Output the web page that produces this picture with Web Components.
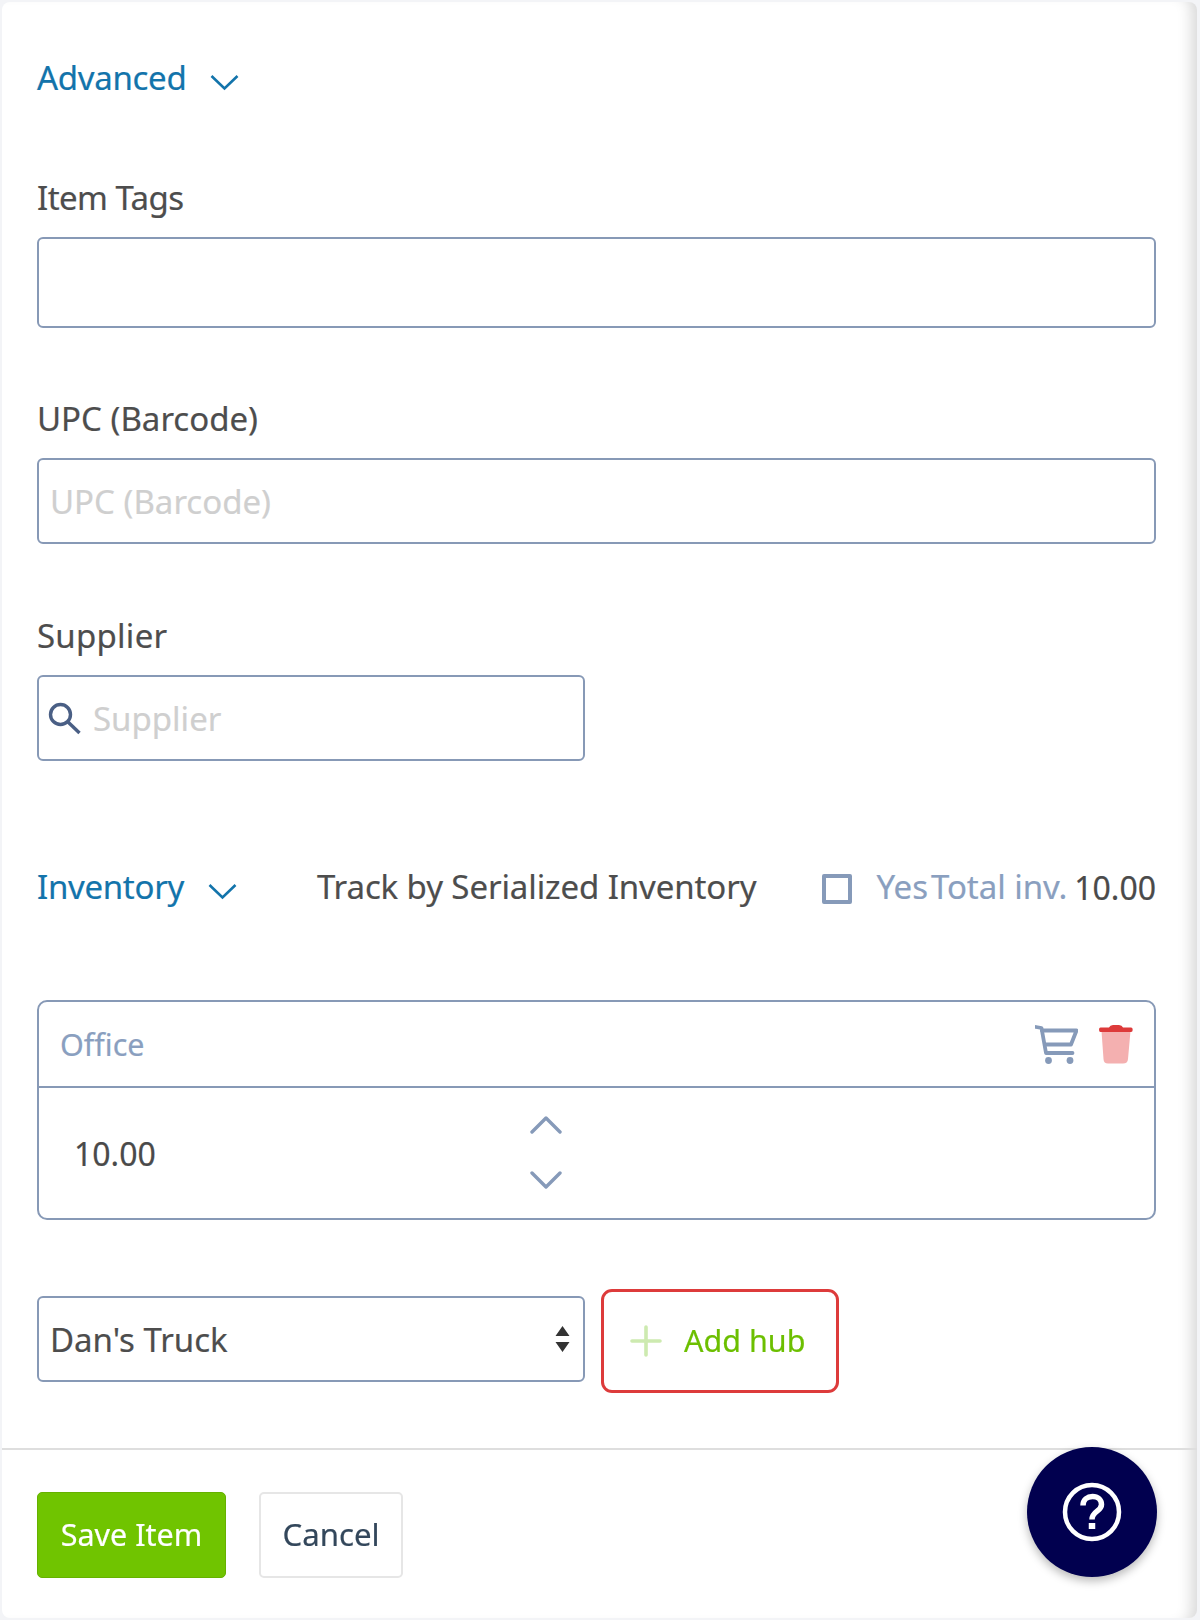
<!DOCTYPE html>
<html lang="en"><head><meta charset="utf-8"><title>Item form</title>
<style>
html,body{margin:0;padding:0;background:#f3f4f7;height:1620px;overflow:hidden}
body{font-family:"Noto Sans","Open Sans",sans-serif;font-size:33px;color:#4a4a4a;-webkit-text-stroke:.2px}
item-form{filter:blur(.3px)}
</style></head><body>
<item-form>
  <section-toggle style="margin-top:54px">Advanced</section-toggle>
  <form-field label="Item Tags" spacing="-.55" style="margin-top:76px" height="91"></form-field>
  <form-field label="UPC (Barcode)" placeholder="UPC (Barcode)" style="margin-top:69px"></form-field>
  <form-field label="Supplier" spacing=".25" placeholder="Supplier" narrow search style="margin-top:70px"></form-field>
  <inventory-bar style="margin-top:104px"></inventory-bar>
  <hub-card name="Office" qty="10.00" style="margin-top:91px"></hub-card>
  <hub-adder style="margin-top:69px"></hub-adder>
  <form-actions slot="footer"></form-actions>
  <help-fab slot="fab"></help-fab>
</item-form>
<script>
const define=(name,html,init)=>customElements.define(name,class extends HTMLElement{
  constructor(){super();this.attachShadow({mode:'open'}).innerHTML=html;}
  connectedCallback(){init&&init(this,this.shadowRoot);}
});
const chev='<svg width="29" height="17" viewBox="0 0 29 17" fill="none" stroke="currentColor" stroke-width="2.6"><path d="M1.5 2 14.5 14.5 27.5 2"/></svg>';

define('item-form',`<style>
:host{display:flex;flex-direction:column;position:relative;box-sizing:border-box;width:1195px;height:1616px;margin:2px 0 0 2px;background:#fff;border-radius:8px;box-shadow:inset -16px 0 14px -10px rgba(0,0,0,.15)}
.body{flex:1;display:flex;flex-direction:column;padding:0 41px 0 35px}
.foot{border-top:2px solid #dedede}
.fab{position:absolute;left:1025px;top:1445px}
::slotted(*){flex:none}
</style><div class="body"><slot></slot></div><div class="foot"><slot name="footer"></slot></div><div class="fab"><slot name="fab"></slot></div>`);

define('section-toggle',`<style>
:host{display:flex;align-items:center;gap:24px;color:#1374ab;height:44px;line-height:44px;letter-spacing:-.3px}
svg{margin-top:8px}
</style><span><slot></slot></span>${chev}`);

define('form-field',`<style>
:host{display:block}
label{display:block;height:44px;line-height:44px;margin-bottom:17px;color:#4d4d4d}
.box{box-sizing:border-box;height:86px;border:2px solid #8799b6;border-radius:6px;display:flex;align-items:center;padding:0 11px;color:#cfcfcf}
:host([narrow]) .box{width:548px}
svg{margin:0 12px 0 -2px;flex:none}
</style><label></label><div class="box"></div>`,(el,s)=>{
  const l=s.querySelector('label');
  l.textContent=el.getAttribute('label');
  if(el.hasAttribute('spacing'))l.style.letterSpacing=el.getAttribute('spacing')+'px';
  const b=s.querySelector('.box');
  if(el.hasAttribute('height'))b.style.height=el.getAttribute('height')+'px';
  if(el.hasAttribute('search'))b.innerHTML='<svg width="33" height="33" viewBox="0 0 33 33" fill="none" stroke="#4a5f85" stroke-width="3.4"><circle cx="12.5" cy="12.5" r="10"/><path d="M20 20 31.5 31"/></svg>';
  if(el.hasAttribute('placeholder'))b.append(el.getAttribute('placeholder'));
});

define('inventory-bar',`<style>
:host{display:flex;align-items:center;height:44px;line-height:44px;white-space:nowrap}
.l{color:#1374ab;display:flex;align-items:center;gap:24px;letter-spacing:-.3px}
svg.c{margin-top:8px}
.t{margin-left:80px;color:#4d4d4d;letter-spacing:-.1px}
.box{box-sizing:border-box;width:30px;height:30px;border:4px solid #869ab9;border-radius:2px;margin:4px 25px 0 auto}
.m{color:#8a9fbf}.tot{color:#8a9fbf;margin-left:3px;letter-spacing:-.05px}.n{color:#4a4a4a;margin:2px 0 0 7px;font-size:32px}
</style><span class="l">Inventory ${chev.replace('<svg','<svg class="c"')}</span><span class="t">Track by Serialized Inventory</span><span class="box"></span><span class="m">Yes</span><span class="tot">Total inv.</span><span class="n">10.00</span>`);

define('hub-card',`<style>
:host{display:block;box-sizing:border-box;border:2px solid #8799b6;border-radius:10px;height:220px}
.h{height:84px;border-bottom:2px solid #8799b6;display:flex;align-items:center;padding:0 21px 0 21px;color:#8a9fbf;font-size:30.5px}
.ic{margin-left:auto;display:flex;gap:21px;align-items:center}
.b{display:flex;align-items:center;padding-left:35px;height:130px;font-size:32px}
.q{width:456px;color:#4a4a4a}
.sp{display:flex;flex-direction:column;gap:37px;width:32px;margin-top:-2px}
</style><div class="h"><span class="n"></span><span class="ic">
<svg width="43" height="39" viewBox="0 0 43 39" fill="none" stroke="#869ab9" stroke-width="3.800" stroke-linecap="round" stroke-linejoin="round"><path d="M1 2 6.500 3 11 28H37.500"/><path d="M7 5.500H41.500L36 19.500H10"/><circle cx="13.500" cy="35.500" r="3.400" fill="#869ab9" stroke="none"/><circle cx="35" cy="35.500" r="3.400" fill="#869ab9" stroke="none"/></svg>
<svg width="34" height="39" viewBox="0 0 34 39"><path d="M2.500 6H31.500L29 34Q28.700 38.500 24 38.500H9Q4.700 38.500 4.500 34Z" fill="#f4b0b0"/><path d="M1.500 2.500H10Q11 0 14 0H20Q23 0 24 2.500H32Q33.700 2.500 33.700 4.700 33.700 7 32 7H1.500Q0 7 0 4.700 0 2.500 1.500 2.500Z" fill="#dd3a3a"/></svg>
</span></div><div class="b"><span class="q"></span><span class="sp">
<svg width="32" height="18" viewBox="0 0 32 18" fill="none" stroke="#869ab9" stroke-width="3.4" stroke-linecap="round" stroke-linejoin="round"><path d="M2 16 16 2 30 16"/></svg>
<svg width="32" height="18" viewBox="0 0 32 18" fill="none" stroke="#869ab9" stroke-width="3.4" stroke-linecap="round" stroke-linejoin="round"><path d="M2 2 16 16 30 2"/></svg>
</span></div>`,(el,s)=>{s.querySelector('.n').textContent=el.getAttribute('name');s.querySelector('.q').textContent=el.getAttribute('qty');});

define('hub-adder',`<style>
:host{display:flex;align-items:flex-start;gap:16px;white-space:nowrap}
.sel{box-sizing:border-box;width:548px;height:86px;border:2px solid #8799b6;border-radius:6px;display:flex;align-items:center;justify-content:space-between;padding:0 13px 0 11px;color:#4d4d4d;margin-top:7px}
.add{box-sizing:border-box;width:238px;height:104px;border:3px solid #dd3b3b;border-radius:11px;display:flex;align-items:center;padding:0 0 0 26px;gap:22px;color:#6cbf00;font-size:30.5px}
.add span{margin-bottom:3px}
svg{flex:none}
</style><div class="sel"><span>Dan's Truck</span><svg width="15" height="28" viewBox="0 0 15 28"><path d="M7.500 1 14.500 11H.5ZM.5 17H14.500L7.500 27Z" fill="#333"/></svg></div>
<div class="add"><svg width="32" height="32" viewBox="0 0 32 32" stroke="#cdeab0" stroke-width="3.600" stroke-linecap="round"><path d="M16 2V30M2 16H30"/></svg><span>Add hub</span></div>`);

define('form-actions',`<style>
:host{display:flex;gap:33px;padding:42px 0 40px 35px}
div{box-sizing:border-box;height:86px;border-radius:5px;display:flex;align-items:center;justify-content:center;padding-bottom:2px}
.s{width:189px;background:#70c400;border:1px solid #66b100;color:#fff;font-size:30.5px}
.c{width:144px;background:#fff;border:2px solid #e6e6e6;color:#33475b;font-size:31.200px}
</style><div class="s">Save Item</div><div class="c">Cancel</div>`);

define('help-fab',`<style>
:host{display:flex;width:130px;height:130px;border-radius:50%;background:#01004f;align-items:center;justify-content:center;box-shadow:0 4px 10px rgba(0,0,0,.28)}
</style><svg width="60" height="60" viewBox="0 0 60 60" fill="none" stroke="#fff" stroke-width="4.500"><circle cx="30" cy="30" r="27"/><path d="M21 23.500C21 17.500 25.500 14.500 30.500 14.500 36 14.500 39.500 18 39.500 22.500 39.500 29.500 30 29 30 37.500" stroke-width="5.500"/><path d="M30 41V47" stroke-width="6.500"/></svg>`);
</script>
</body></html>
